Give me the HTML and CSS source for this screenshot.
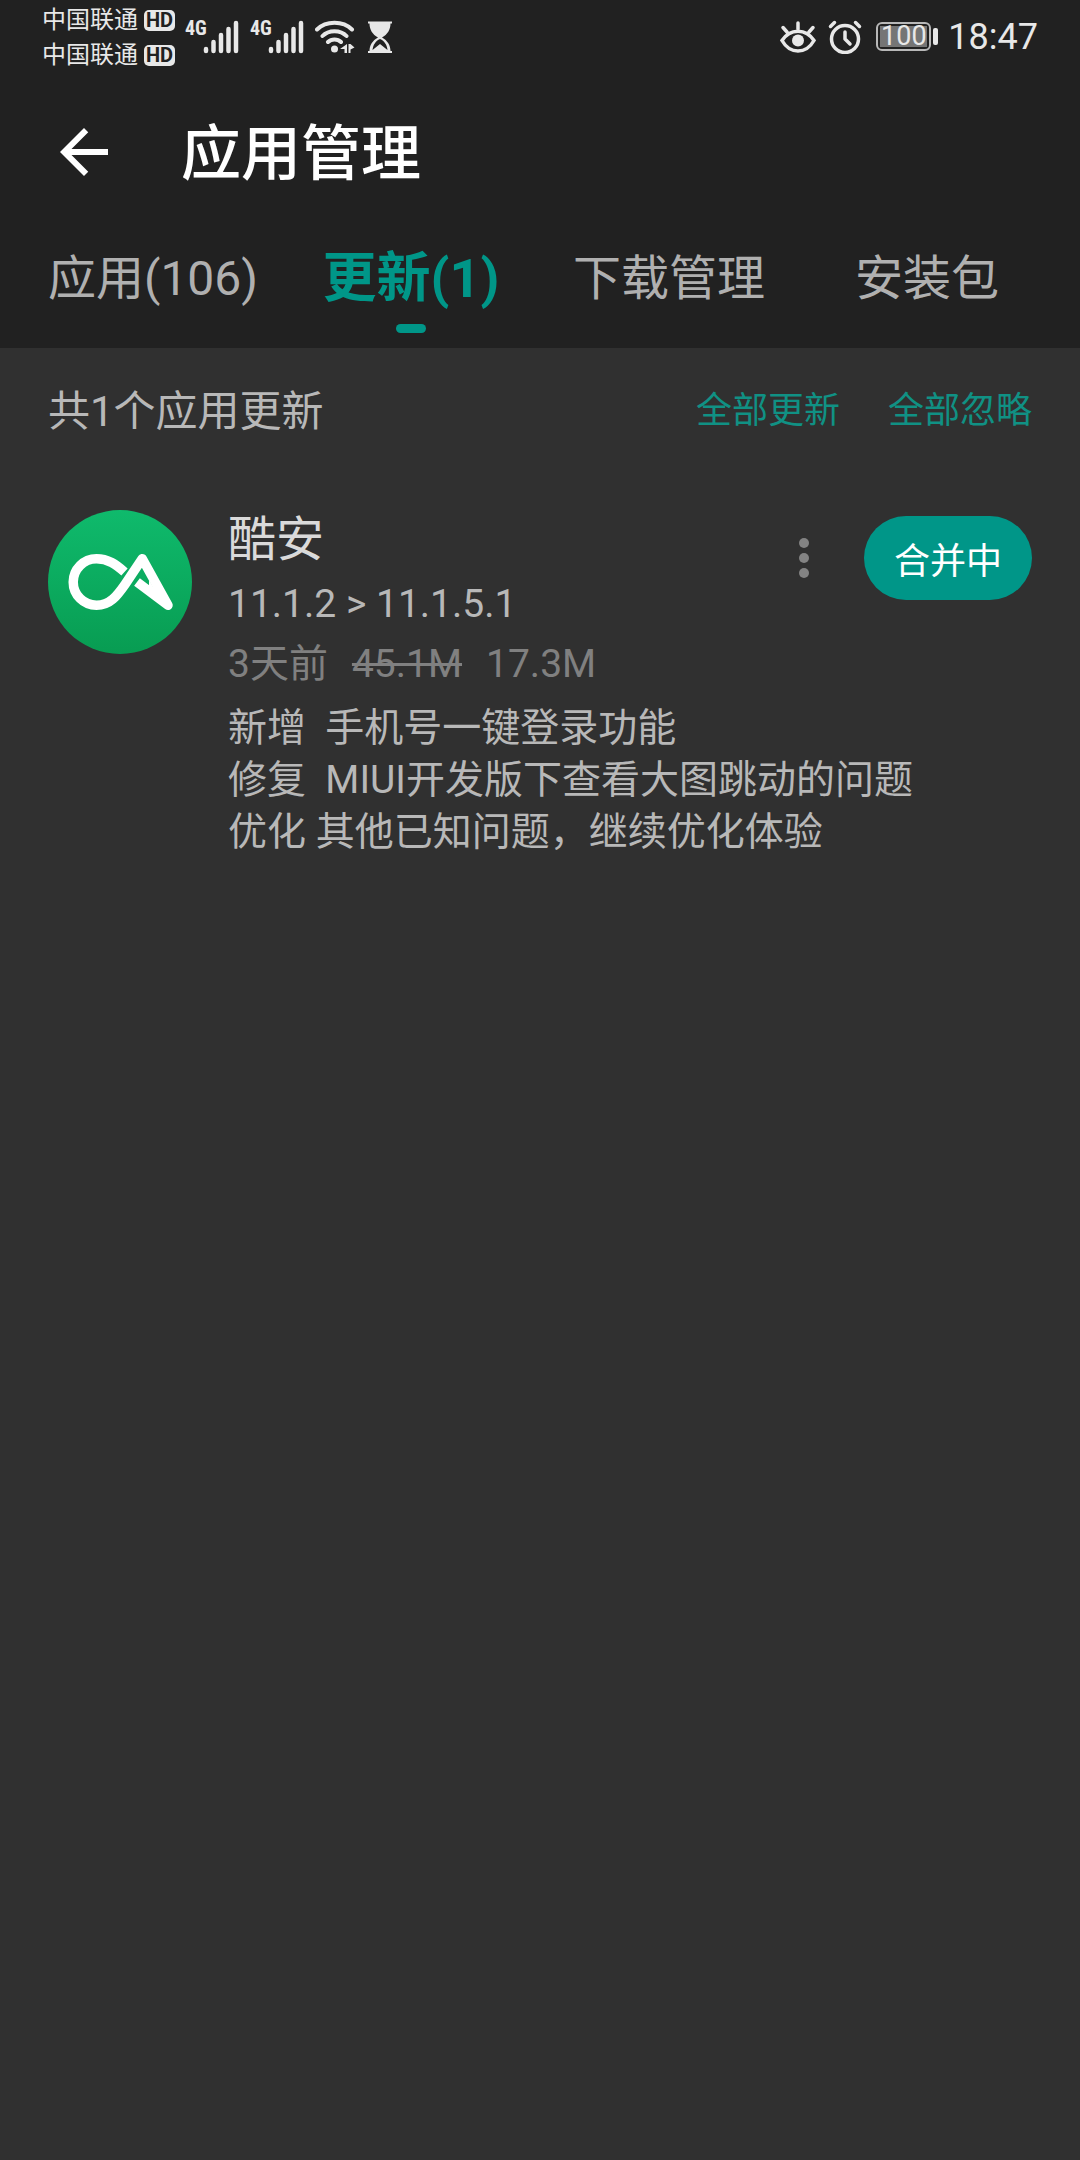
FILE: index.html
```html
<!DOCTYPE html>
<html lang="zh-CN">
<head>
<meta charset="utf-8">
<meta name="viewport" content="width=device-width, initial-scale=1">
<title>应用管理</title>
<link rel="stylesheet" href="styles.css">
</head>
<body>
<header class="header">
  <div class="status">
    <div class="carriers">
      <div class="carrier">中国联通<span class="hd">HD</span></div>
      <div class="carrier">中国联通<span class="hd">HD</span></div>
    </div>
    <div class="signal">
      <span class="network">4G</span>
      <svg class="bars" width="36" height="34" viewBox="0 0 36 34"><path d="M3 29v2M10.500 22v9M18 15v16M25.500 9v22M33 3v28" stroke="currentColor" stroke-width="4.500" stroke-linecap="round"/></svg>
    </div>
    <div class="signal">
      <span class="network">4G</span>
      <svg class="bars" width="36" height="34" viewBox="0 0 36 34"><path d="M3 29v2M10.500 22v9M18 15v16M25.500 9v22M33 3v28" stroke="currentColor" stroke-width="4.500" stroke-linecap="round"/></svg>
    </div>
    <svg class="wifi" width="40" height="34" viewBox="1 0 40 34">
      <g fill="none" stroke="currentColor" stroke-width="4" stroke-linecap="round"><path d="M3 9.500C12 .5 29 .5 38 9.500M8.500 16c6-6.500 18-6.500 24 0M14 22c3.500-3.500 9.500-3.500 13 0"/></g>
      <circle cx="20.500" cy="29" r="3.500" fill="currentColor"/>
      <path d="M33 24v9h-2.500v-4H26zM34.500 24h2l4 3.500-4 2v3.500h-2z" fill="currentColor"/>
    </svg>
    <svg class="hourglass" width="26" height="34" viewBox="0 0 26 34">
      <path d="M1 1.500h24v2h-1.500c0 6-3 11-8.500 14 5.500 3 8.500 8 8.500 13.500H25v2H1v-2h1.500C2.500 25.500 5.500 20.500 11 17.500 5.500 14.500 2.500 9.500 2.500 3.500H1zM13 19c-4.500 2-7 6-7.500 11L13 24l7.500 6c-.5-5-3-9-7.500-11z" fill="currentColor" fill-rule="evenodd"/>
    </svg>
    <div class="status-right">
      <svg width="38" height="34" viewBox="0 0 38 34">
        <g fill="none" stroke="currentColor" stroke-width="3.500" stroke-linecap="round"><path d="M3 20.500c8-12.500 24-12.500 32 0-8 14-24 14-32 0zM19 9V3M8 12 4 7.500M30 12l4-4.500"/></g>
        <circle cx="19" cy="20.500" r="6" fill="currentColor"/>
      </svg>
      <svg width="34" height="34" viewBox="0 0 34 34">
        <g fill="none" stroke="currentColor" stroke-width="3.500" stroke-linecap="round" stroke-linejoin="round"><circle cx="17" cy="19" r="13.500"/><path d="M17 12v7l5 5M2.500 6.500l4-4M31.500 6.500l-4-4"/></g>
      </svg>
      <span class="battery"><span class="charge">100</span></span>
      <time class="clock">18:47</time>
    </div>
  </div>

  <div class="titlebar">
    <button class="back" type="button" aria-label="返回">
      <svg width="72" height="72" viewBox="0 0 24 24"><path d="M20 11H7.830l5.590-5.590L12 4l-8 8 8 8 1.410-1.410L7.830 13H20z" fill="currentColor"/></svg>
    </button>
    <h1 class="title">应用管理</h1>
  </div>

  <nav class="tabs">
    <a class="tab" href="#apps">应用(106)</a>
    <a class="tab tab-active" href="#updates" aria-current="page">更新(1)</a>
    <a class="tab" href="#downloads">下载管理</a>
    <a class="tab" href="#packages">安装包</a>
  </nav>
</header>

<main>
  <div class="summary">
    <h2 class="count">共1个应用更新</h2>
    <button class="link" type="button">全部更新</button>
    <button class="link" type="button">全部忽略</button>
  </div>

  <article class="app">
    <svg class="logo" width="144" height="144" viewBox="0 0 144 144">
      <defs><linearGradient id="green" x1="0" y1="0" x2="0" y2="1"><stop offset="0" stop-color="#0fba6c"/><stop offset="1" stop-color="#089c52"/></linearGradient></defs>
      <circle cx="72" cy="72" r="72" fill="url(#green)"/>
      <g fill="none" stroke="#fff" stroke-width="9.500" stroke-linejoin="round">
        <path d="M76.500 62C68 54.500 60 48.700 48.500 48.700a23.300 23.300 0 0 0 0 46.600C62 95.300 69 86 77 74.500L94.300 48.700 120 95.300 89 72"/>
      </g>
      <path d="M101 70l6 10 13 15-19-14z" fill="#fff"/>
    </svg>
    <div class="info">
      <div class="top">
        <div class="names">
          <h3 class="name">酷安</h3>
          <p class="version">11.1.2 &gt; 11.1.5.1</p>
        </div>
        <button class="more" type="button" aria-label="更多">
          <svg width="48" height="48" viewBox="0 0 48 48"><g fill="currentColor"><circle cx="24" cy="9" r="5"/><circle cx="24" cy="24" r="5"/><circle cx="24" cy="39" r="5"/></g></svg>
        </button>
        <button class="action" type="button">合并中</button>
      </div>
      <p class="meta"><span>3天前</span><s>45.1M</s><span>17.3M</span></p>
      <p class="changes">新增  手机号一键登录功能
修复  MIUI开发版下查看大图跳动的问题
优化 其他已知问题，继续优化体验</p>
    </div>
  </article>
</main>
</body>
</html>
```
FILE: styles.css
```css
* { box-sizing: border-box; }

body {
  margin: 0;
  min-height: 100vh;
  background: #303030;
  color: #b8b8b8;
  font-family: Roboto, "Noto Sans CJK SC", sans-serif;
}

h1, h2, h3, p { margin: 0; font-weight: 400; }

button {
  padding: 0;
  border: 0;
  background: none;
  color: inherit;
  font: inherit;
  cursor: pointer;
}

svg { display: block; flex: none; }

.header { background: #212121; }

/* Status bar */
.status {
  display: flex;
  align-items: center;
  padding: 0 42px;
  color: #e8e8e8;
}

.carriers { margin-right: 10px; padding-top: 3px; }

.carrier {
  display: flex;
  align-items: center;
  gap: 6px;
  height: 35px;
  font-size: 24px;
  line-height: 35px;
}

.hd {
  width: 31px;
  border-radius: 5px;
  background: #e8e8e8;
  color: #212121;
  font-size: 20px;
  font-weight: 700;
  line-height: 21px;
  text-align: center;
}

.signal {
  display: flex;
  align-items: flex-start;
  width: 65px;
}

.network {
  width: 18px;
  font-family: "Roboto Condensed", "Liberation Sans Narrow", Roboto, sans-serif;
  font-size: 20px;
  font-weight: 700;
  line-height: 16px;
}

.wifi { margin-right: 12px; }

.status-right {
  display: flex;
  align-items: center;
  gap: 11px;
  margin-left: auto;
}

.battery {
  position: relative;
  display: block;
  margin: 0 6px 0 3px;
  padding: 2px;
  border: 2px solid #b8b8b8;
  border-radius: 6px;
}

.battery::after {
  content: "";
  position: absolute;
  top: 4px;
  right: -9px;
  width: 5px;
  height: 17px;
  border-radius: 2px;
  background: #e8e8e8;
}

.charge {
  display: block;
  width: 47px;
  background: #757575;
  font-size: 27px;
  line-height: 21px;
  text-align: center;
}

.clock { font-size: 36px; line-height: 40px; }

/* Title and tabs */
.titlebar {
  display: flex;
  align-items: center;
  gap: 61px;
  height: 157px;
  padding: 0 48px;
  color: #fff;
}

.title {
  padding-top: 6px;
  font-size: 60px;
  font-weight: 500;
  line-height: 72px;
}

.tabs {
  display: grid;
  grid-template-columns: repeat(4, 1fr);
  padding: 0 24px;
}

.tab {
  display: flex;
  flex-direction: column;
  align-items: center;
  height: 118px;
  color: #b0b0b0;
  font-size: 48px;
  line-height: 98px;
  text-decoration: none;
}

.tab-active {
  color: #009688;
  font-size: 54px;
  font-weight: 700;
}

.tab-active::after {
  content: "";
  width: 30px;
  height: 9px;
  margin-top: -4px;
  border-radius: 5px;
  background: #009688;
}

/* Update list */
.summary {
  display: flex;
  align-items: center;
  gap: 48px;
  height: 118px;
  padding: 0 48px;
}

.count { margin-right: auto; font-size: 42px; }

.link { color: #109184; font-size: 36px; }

.app {
  display: flex;
  gap: 36px;
  padding: 44px 48px;
}

.info { flex: 1; }

.top { display: flex; align-items: flex-start; }

.names { flex: 1; }

.name { color: #dadada; font-size: 48px; line-height: 60px; }

.version { font-size: 39px; line-height: 68px; }

.more { margin: 24px 36px 0 0; color: #838383; }

.action {
  width: 168px;
  height: 84px;
  margin-top: 6px;
  border-radius: 42px;
  background: #009688;
  color: #fff;
  font-size: 36px;
}

.meta {
  display: flex;
  gap: 24px;
  color: #808080;
  font-size: 39px;
  line-height: 52px;
}

.changes {
  margin-top: 12px;
  font-size: 39px;
  line-height: 52px;
  white-space: pre-wrap;
}
```
